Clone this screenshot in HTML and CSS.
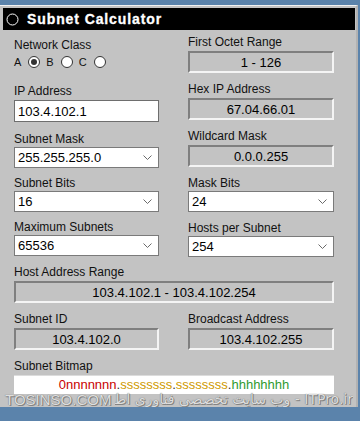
FILE: index.html
```html
<!DOCTYPE html>
<html lang="en">
<head>
  <meta charset="UTF-8">
  <title>Subnet Calculator</title>
  <link rel="stylesheet" href="styles.css">
</head>
<body>
  <div class="panel">
    <div class="titlebar">
      <svg class="title-icon" width="13" height="13" viewBox="0 0 13 13"><circle cx="6.5" cy="6.5" r="5.5" fill="none" stroke="#fff" stroke-width="1"/></svg>
      <span>Subnet Calculator</span>
    </div>

    <div class="grid">
      <div class="col left">
        <div class="field net-class">
          <label>Network Class</label>
          <div class="radios">
            <span class="opt">A</span><span class="radio checked"></span>
            <span class="opt">B</span><span class="radio"></span>
            <span class="opt">C</span><span class="radio"></span>
          </div>
        </div>
        <div class="field ip">
          <label>IP Address</label>
          <input class="text" type="text" value="103.4.102.1">
        </div>
        <div class="field sel">
          <label>Subnet Mask</label>
          <div class="select"><span>255.255.255.0</span><svg class="chev" width="9" height="5" viewBox="0 0 9 5"><path d="M0.5 0.5 L4.5 4.5 L8.5 0.5" fill="none" stroke="#6a6a6a" stroke-width="1"/></svg></div>
        </div>
        <div class="field sel">
          <label>Subnet Bits</label>
          <div class="select"><span>16</span><svg class="chev" width="9" height="5" viewBox="0 0 9 5"><path d="M0.5 0.5 L4.5 4.5 L8.5 0.5" fill="none" stroke="#6a6a6a" stroke-width="1"/></svg></div>
        </div>
        <div class="field sel">
          <label>Maximum Subnets</label>
          <div class="select"><span>65536</span><svg class="chev" width="9" height="5" viewBox="0 0 9 5"><path d="M0.5 0.5 L4.5 4.5 L8.5 0.5" fill="none" stroke="#6a6a6a" stroke-width="1"/></svg></div>
        </div>
      </div>

      <div class="col right">
        <div class="field">
          <label>First Octet Range</label>
          <div class="readout">1 - 126</div>
        </div>
        <div class="field">
          <label>Hex IP Address</label>
          <div class="readout">67.04.66.01</div>
        </div>
        <div class="field">
          <label>Wildcard Mask</label>
          <div class="readout">0.0.0.255</div>
        </div>
        <div class="field sel">
          <label>Mask Bits</label>
          <div class="select"><span>24</span><svg class="chev" width="9" height="5" viewBox="0 0 9 5"><path d="M0.5 0.5 L4.5 4.5 L8.5 0.5" fill="none" stroke="#6a6a6a" stroke-width="1"/></svg></div>
        </div>
        <div class="field sel">
          <label>Hosts per Subnet</label>
          <div class="select"><span>254</span><svg class="chev" width="9" height="5" viewBox="0 0 9 5"><path d="M0.5 0.5 L4.5 4.5 L8.5 0.5" fill="none" stroke="#6a6a6a" stroke-width="1"/></svg></div>
        </div>
      </div>
    </div>

    <div class="wide">
      <div class="field">
        <label>Host Address Range</label>
        <div class="readout">103.4.102.1 - 103.4.102.254</div>
      </div>
      <div class="pair">
        <div class="field">
          <label>Subnet ID</label>
          <div class="readout">103.4.102.0</div>
        </div>
        <div class="field">
          <label>Broadcast Address</label>
          <div class="readout">103.4.102.255</div>
        </div>
      </div>
      <div class="field">
        <label>Subnet Bitmap</label>
        <div class="bitmap"><span class="bn">0nnnnnnn</span>.<span class="bs">ssssssss</span>.<span class="bs">ssssssss</span>.<span class="bh">hhhhhhhh</span></div>
      </div>
    </div>

    <div class="watermark">
      <span class="wm-left">TOSINSO.COM</span>
      <span class="wm-right" dir="rtl">ITPro.ir - وب سایت تخصصی فناوری اطلاعات</span>
    </div>
  </div>
</body>
</html>
```

FILE: styles.css
```css
body { margin: 0; background: #5b83ab; font-family: "Liberation Sans", Arial, sans-serif; color: #111; }

.panel { position: relative; width: 356px; margin-top: 5px; background: #c3c3c3; border-top: 1px solid #f2f2f2; border-right: 2px solid #b2b2b2; padding-bottom: 13px; overflow: hidden; }

.titlebar { display: flex; align-items: center; height: 22px; margin: 2px 1px 0 3px; background: #000; color: #fff; }
.title-icon { margin: 0 8px 0 3px; }
.titlebar span { font-weight: bold; font-size: 14px; letter-spacing: 0.9px; -webkit-text-stroke: 0.3px #fff; }

.grid { display: grid; grid-template-columns: 145px 146px; column-gap: 29px; padding: 5px 0 0 14px; }
.col { display: flex; flex-direction: column; }
.left { padding-top: 3px; gap: 8px; }
.right { gap: 9px; }

.field { display: flex; flex-direction: column; gap: 2px; }
.field.sel { gap: 1px; }
.field label { font-size: 12px; line-height: 14px; }
.net-class { margin-bottom: 6px; }
.ip { margin-bottom: 2px; }

.radios { display: flex; align-items: center; height: 16px; font-size: 11px; }
.opt { margin-right: 7px; }
.radio { width: 10px; height: 10px; border: 1px solid #333; border-radius: 50%; background: #fff; margin-right: 6px; display: flex; align-items: center; justify-content: center; }
.radio.checked::after { content: ""; width: 6px; height: 6px; border-radius: 50%; background: #333; }

.text { box-sizing: border-box; height: 22px; width: 145px; margin: 0; padding: 0 3px; border: 1px solid #6e6e6e; background: #fff; font: 13px "Liberation Sans", Arial, sans-serif; color: #000; outline: none; }

.select { box-sizing: border-box; height: 21px; display: flex; align-items: center; justify-content: space-between; padding: 0 6px 0 3px; border: 1px solid #7a7a7a; background: #fff; font-size: 13px; color: #000; }

.readout { box-sizing: border-box; height: 22px; display: flex; align-items: center; justify-content: center; border: 2px solid; border-color: #7f7f7f #f4f4f4 #f4f4f4 #7f7f7f; font-size: 13px; color: #000; }

.wide { display: flex; flex-direction: column; gap: 9px; width: 320px; padding: 8px 0 0 14px; }
.pair { display: grid; grid-template-columns: 145px 146px; column-gap: 29px; }

.bitmap { box-sizing: border-box; height: 19px; padding-top: 1px; border-top: 1px solid #dcdcdc; background: #fff; text-align: center; font-size: 13px; color: #333; }
.bn { color: #c80000; }
.bs { color: #d09a00; }
.bh { color: #2f9a2f; }

.watermark { position: absolute; left: 0; right: 0; bottom: 0; height: 15px; display: flex; align-items: center; font-size: 15px; line-height: 15px; color: #dedede; text-shadow: 0 0 1px #555, 1px 1px 0 #8a8a8a; white-space: nowrap; }
.wm-left { flex: none; margin-left: 5px; font-family: "Liberation Sans", sans-serif; }
.wm-right { flex: 1; overflow: hidden; text-align: right; margin: 0 3px 0 4px; font-family: "DejaVu Sans", sans-serif; font-size: 14px; }
```
